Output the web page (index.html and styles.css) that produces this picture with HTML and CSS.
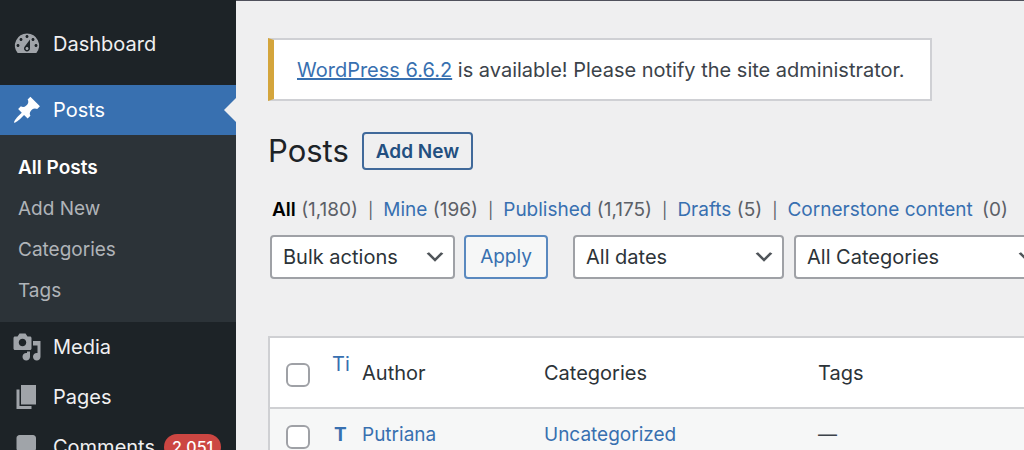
FILE: index.html
```html
<!DOCTYPE html>
<html lang="en">
<head>
<meta charset="utf-8">
<title>Posts</title>
<link rel="stylesheet" href="styles.css">
</head>
<body class="admin">
<nav class="sidebar" aria-label="Main menu">
  <a class="menu-item" href="#">
    <svg class="menu-icon" viewBox="0 0 20 20" aria-hidden="true"><path fill-rule="evenodd" d="M3.76 16h12.48A7.998 7.998 0 0 0 10 3a7.998 7.998 0 0 0-6.24 13zM10 4c.55 0 1 .45 1 1s-.45 1-1 1-1-.45-1-1 .45-1 1-1zM6 6c.55 0 1 .45 1 1s-.45 1-1 1-1-.45-1-1 .45-1 1-1zm8 0c.55 0 1 .45 1 1s-.45 1-1 1-1-.45-1-1 .45-1 1-1zm-5.37 5.55L12 7v6c0 1.1-.9 2-2 2s-2-.9-2-2c0-.57.24-1.08.63-1.45zM4 10c.55 0 1 .45 1 1s-.45 1-1 1-1-.45-1-1 .45-1 1-1zm12 0c.55 0 1 .45 1 1s-.45 1-1 1-1-.45-1-1 .45-1 1-1zm-5 3c0-.55-.45-1-1-1s-1 .45-1 1 .45 1 1 1 1-.45 1-1z"/></svg>
    <span>Dashboard</span>
  </a>
  <div class="menu-group">
    <a class="menu-item current" href="#">
      <svg class="menu-icon" viewBox="0 0 20 20" aria-hidden="true"><path d="M10.44 3.02l1.82-1.82 6.36 6.35-1.83 1.82c-1.05-.68-2.48-.57-3.41.36l-.75.75c-.92.93-1.04 2.35-.35 3.41l-1.83 1.82-2.41-2.41-2.8 2.79c-.42.42-3.38 2.71-3.8 2.29s1.86-3.39 2.28-3.81l2.79-2.79L4.1 9.36l1.83-1.82c1.05.69 2.48.57 3.4-.36l.75-.75c.93-.92 1.05-2.35.36-3.41z"/></svg>
      <span>Posts</span>
    </a>
    <div class="submenu">
      <a class="submenu-item active" href="#">All Posts</a>
      <a class="submenu-item" href="#">Add New</a>
      <a class="submenu-item" href="#">Categories</a>
      <a class="submenu-item" href="#">Tags</a>
    </div>
  </div>
  <a class="menu-item" href="#">
    <svg class="menu-icon" viewBox="0 0 20 20" aria-hidden="true"><path fill-rule="evenodd" d="M13 11V4c0-.55-.45-1-1-1h-1.67L9 1H5L3.67 3H2c-.55 0-1 .45-1 1v7c0 .55.45 1 1 1h10c.55 0 1-.45 1-1zM7 4.5c1.38 0 2.5 1.12 2.5 2.5S8.38 9.5 7 9.5 4.5 8.38 4.5 7 5.62 4.5 7 4.5zM14 6h5v10.5c0 1.38-1.12 2.5-2.5 2.5S14 17.88 14 16.5s1.12-2.5 2.5-2.5c.17 0 .34.02.5.05V9h-3V6zm-4 8.05V13h2v3.5c0 1.38-1.12 2.5-2.5 2.5S7 17.88 7 16.5 8.12 14 9.5 14c.17 0 .34.02.5.05z"/></svg>
    <span>Media</span>
  </a>
  <a class="menu-item" href="#">
    <svg class="menu-icon" viewBox="0 0 20 20" aria-hidden="true"><path d="M6 15V2h10v13H6zm-1 1h8v2H3V5h2v11z"/></svg>
    <span>Pages</span>
  </a>
  <a class="menu-item" href="#">
    <svg class="menu-icon" viewBox="0 0 20 20" aria-hidden="true"><path d="M5 2h9c1.1 0 2 .9 2 2v7c0 1.1-.9 2-2 2h-2l-5 5v-5H5c-1.1 0-2-.9-2-2V4c0-1.1.9-2 2-2z"/></svg>
    <span>Comments</span>
    <span class="count-badge">2,051</span>
  </a>
</nav>

<main class="content">
  <div class="notice"><a href="#">WordPress 6.6.2</a> is available! Please notify the site administrator.</div>

  <header class="page-header">
    <h1 class="page-title">Posts</h1>
    <a class="title-action" href="#">Add New</a>
  </header>

  <ul class="views">
    <li><a class="selected" href="#">All</a> (1,180)</li>
    <li><a href="#">Mine</a> (196)</li>
    <li><a href="#">Published</a> (1,175)</li>
    <li><a href="#">Drafts</a> (5)</li>
    <li class="spaced"><a href="#">Cornerstone content</a> <span>(0)</span></li>
  </ul>

  <div class="toolbar">
    <div class="select-box bulk">
      <select aria-label="Bulk actions"><option>Bulk actions</option></select>
      <svg class="chevron" viewBox="0 0 20 20" aria-hidden="true"><path d="M5 6l5 5 5-5 2 1-7 7-7-7 2-1z"/></svg>
    </div>
    <button class="apply" type="button">Apply</button>
    <div class="select-box dates">
      <select aria-label="Filter by date"><option>All dates</option></select>
      <svg class="chevron" viewBox="0 0 20 20" aria-hidden="true"><path d="M5 6l5 5 5-5 2 1-7 7-7-7 2-1z"/></svg>
    </div>
    <div class="select-box cats">
      <select aria-label="Filter by category"><option>All Categories</option></select>
      <svg class="chevron" viewBox="0 0 20 20" aria-hidden="true"><path d="M5 6l5 5 5-5 2 1-7 7-7-7 2-1z"/></svg>
    </div>
  </div>

  <table class="posts">
    <colgroup><col class="col-check"><col class="col-title"><col class="col-author"><col class="col-cats"><col></colgroup>
    <thead>
      <tr>
        <td><input class="check" type="checkbox" aria-label="Select all"></td>
        <th class="title-head" scope="col"><a href="#">Ti</a></th>
        <th scope="col">Author</th>
        <th scope="col">Categories</th>
        <th scope="col">Tags</th>
      </tr>
    </thead>
    <tbody>
      <tr>
        <td><input class="check" type="checkbox" aria-label="Select post"></td>
        <td class="title-cell"><a href="#">T</a></td>
        <td><a href="#">Putriana</a></td>
        <td><a href="#">Uncategorized</a></td>
        <td>—</td>
      </tr>
    </tbody>
  </table>
</main>
</body>
</html>
```
FILE: styles.css
```css
* {
  box-sizing: border-box;
}

.admin {
  margin: 0;
  height: 100vh;
  display: flex;
  overflow: hidden;
  background: #efeff0;
  color: #3c434a;
  font-family: Inter, "Liberation Sans", sans-serif;
  font-size: 20px;
  line-height: 28px;
}

a {
  color: #3870b0;
  text-decoration: none;
}

.sidebar {
  flex: 0 0 236px;
  padding-top: 19px;
  background: #1d2327;
}

.menu-item {
  display: flex;
  align-items: center;
  height: 50px;
  padding-left: 12px;
  color: #f0f0f1;
}

.menu-icon {
  width: 30px;
  height: 30px;
  margin-right: 11px;
  fill: #a0a4a9;
}

.menu-group {
  margin-top: 16px;
}

.current {
  position: relative;
  background: #3870b0;
  color: #fff;
}

.current .menu-icon {
  fill: #fff;
}

.current::after {
  content: "";
  position: absolute;
  right: 0;
  top: 13px;
  border: 12px solid transparent;
  border-left-width: 0;
  border-right-color: #efeff0;
}

.submenu {
  display: flex;
  flex-direction: column;
  padding: 12px 18px 11px;
  background: #2c3338;
}

.submenu-item {
  color: #b0b4b8;
  font-size: 19px;
  line-height: 41px;
}

.submenu-item.active {
  color: #fff;
  font-weight: 600;
}

.count-badge {
  margin-left: 9px;
  padding: 0 8px;
  border-radius: 14px;
  background: #cc4642;
  color: #fff;
  font-size: 16px;
  font-weight: 500;
  line-height: 26px;
}

.content {
  flex: 1;
  min-width: 0;
  overflow: hidden;
  padding: 37px 0 0 32px;
  border-top: 1px solid #50515c;
}

.notice {
  width: fit-content;
  padding: 16px 25px 15px 23px;
  border: 2px solid #cfd0d4;
  border-left: 6px solid #d4a53c;
  background: #fff;
  white-space: nowrap;
}

.notice a {
  text-decoration: underline;
}

.page-header {
  display: flex;
  align-items: center;
  gap: 13px;
  margin-top: 30px;
}

.page-title {
  margin: 0;
  color: #1d2327;
  font-size: 31px;
  font-weight: 400;
  line-height: 40px;
}

.title-action {
  padding: 4px 12px 2px;
  border: 2px solid #40699a;
  border-radius: 4px;
  color: #234f80;
  font-size: 19px;
  font-weight: 600;
}

.views {
  display: flex;
  margin: 25px 0 0;
  padding: 0 0 0 4px;
  list-style: none;
  color: #5c6067;
  font-size: 19px;
  white-space: nowrap;
}

.views li + li::before {
  content: "|";
  margin: 0 10px;
  font-size: 16px;
}

.views .selected {
  color: #000;
  font-weight: 600;
}

.spaced span {
  margin-left: 4px;
}

.toolbar {
  display: flex;
  margin-top: 11px;
  padding-left: 2px;
}

.select-box {
  position: relative;
  flex: none;
}

.select-box select {
  width: 100%;
  height: 44px;
  padding: 0 36px 0 11px;
  border: 2px solid #9fa1a6;
  border-radius: 4px;
  appearance: none;
  background: #fff;
  color: #2c3338;
  font: inherit;
}

.chevron {
  position: absolute;
  right: 8px;
  top: 10px;
  width: 24px;
  height: 24px;
  fill: #50555a;
  pointer-events: none;
}

.bulk {
  width: 185px;
}

.dates {
  width: 211px;
  margin: 0 10px 0 25px;
}

.cats {
  width: 253px;
}

.apply {
  flex: none;
  width: 84px;
  height: 44px;
  margin-left: 9px;
  padding: 0;
  border: 2px solid #5a89bf;
  border-radius: 4px;
  background: #f6f7f7;
  color: #3870b0;
  font: inherit;
  font-size: 19px;
}

.posts {
  width: 100%;
  margin-top: 57px;
  table-layout: fixed;
  border: 2px solid #cfd0d3;
  border-right: 0;
  border-collapse: collapse;
  background: #fff;
  font-size: 19px;
}

.posts th,
.posts td {
  padding: 0 0 0 10px;
  text-align: left;
  font-weight: 400;
  white-space: nowrap;
}

.posts th {
  color: #2c3338;
  font-size: 20px;
}

.posts thead tr {
  height: 71px;
  border-bottom: 2px solid #cfd0d3;
}

.posts tbody tr {
  height: 54px;
  background: #f6f7f7;
}

.posts .title-head {
  padding-bottom: 18px;
}

.posts .title-cell {
  padding-left: 12px;
  font-weight: 700;
}

.posts td:first-child {
  padding-left: 16px;
}

.col-check {
  width: 53px;
}

.col-title {
  width: 30px;
}

.col-author {
  width: 182px;
}

.col-cats {
  width: 274px;
}

.check {
  display: block;
  width: 24px;
  height: 24px;
  margin: 4px 0 0;
  border: 2px solid #9fa1a6;
  border-radius: 6px;
  appearance: none;
  background: #fff;
}
```
